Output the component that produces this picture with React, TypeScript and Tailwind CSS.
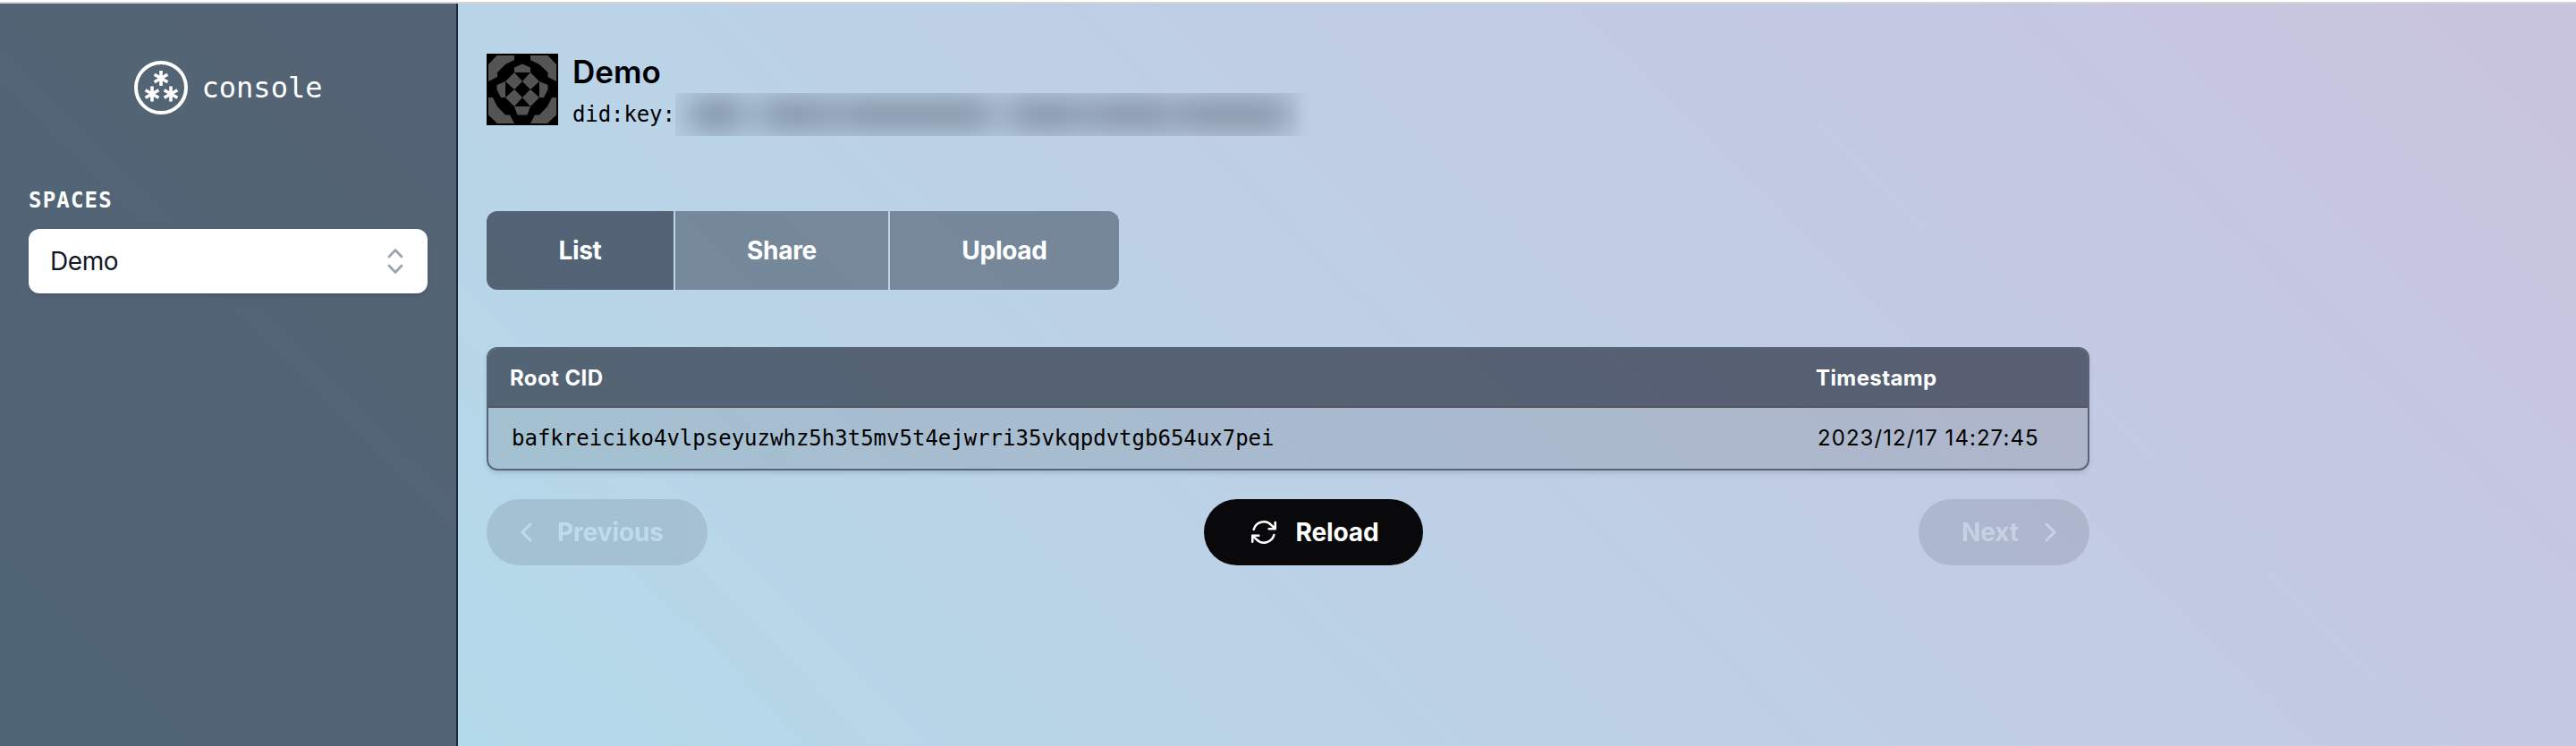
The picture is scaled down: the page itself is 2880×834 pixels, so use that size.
import React from 'react';

const TABS = [
  { label: 'List', className: 'w-[209px] bg-gray-900/60 rounded-l-[12px]' },
  { label: 'Share', className: 'w-[238px] bg-gray-900/40' },
  { label: 'Upload', className: 'w-[256px] bg-gray-900/40 rounded-r-[12px]' },
];

const ASTERISKS = [
  [30, 19.5],
  [20, 37],
  [41, 37],
];

function Logo() {
  return (
    <svg className="size-[60px]" viewBox="0 0 60 60" fill="none" stroke="white">
      <circle cx="30" cy="30" r="28" strokeWidth="4" />
      {ASTERISKS.map(([x, y]) => (
        <path
          key={`${x}-${y}`}
          transform={`translate(${x} ${y})`}
          d="M0-8.500V8.500M-7.400-4.200L7.400 4.200M-7.400 4.200L7.400-4.200"
          strokeWidth="3.600"
        />
      ))}
    </svg>
  );
}

function Identicon() {
  return (
    <svg className="size-20" viewBox="0 0 80 80">
      <rect width="80" height="80" fill="#000" />
      <g fill="#545454">
        <path d="M11.500 2H31V7L21 12L12 21V26L2 31V12Z" />
        <path d="M49 2H68.500L78 12V31L68.500 26V21L59 12L49 7Z" />
        <path d="M2 49H7L12 59L21 68.500H26L31 78H12L2 68.500Z" />
        <path d="M78 49H73L68 59L59 68.500H54L49 78H68L78 68.500Z" />
        <path d="M31 15.500L40 11.500L49 15.500V21H31Z" />
        <path d="M31 59H49L45.500 68.500H34.500Z" />
        <path d="M21 31V49H16L11.500 40V35Z" />
        <path d="M59 31V49H64L68.500 40V35Z" />
        <path d="M31 21L40 31L49 21L59 31L49 40L59 49L49 59L40 49L31 59L21 49L31 40L21 31Z" />
      </g>
      <path d="M40 31L49 40L40 49L31 40Z" />
    </svg>
  );
}

function Sidebar() {
  return (
    <nav className="w-[512px] shrink-0 border-r-2 border-gray-800 bg-gray-900/60 px-8 pt-[64px] text-white">
      <header className="flex items-center justify-center gap-[16px]">
        <Logo />
        <span className="font-['DejaVu_Sans_Mono',monospace] text-[32px] leading-[60px]">console</span>
      </header>
      <h3 className="mt-[76px] font-['DejaVu_Sans_Mono',monospace] text-[24px] font-bold leading-[40px] tracking-[1.2px]">
        SPACES
      </h3>
      <button className="mt-[12px] flex h-[72px] w-full items-center justify-between rounded-[12px] bg-white pl-[24px] pr-[22px] text-[28px] tracking-[-0.400px] text-gray-900 shadow-md">
        <span>Demo</span>
        <svg className="size-[28px]" viewBox="0 0 28 28" fill="none" stroke="#9ca3af" strokeWidth="2.600" strokeLinecap="round" strokeLinejoin="round">
          <path d="M7 9L14 1.500L21 9M7 19L14 26.500L21 19" />
        </svg>
      </button>
    </nav>
  );
}

function SpaceHeader() {
  return (
    <header className="flex gap-4">
      <Identicon />
      <div className="flex flex-col">
        <h1 className="text-[35px] font-semibold leading-[40px]">Demo</h1>
        <div className="mt-[4px] flex font-['DejaVu_Sans_Mono',monospace] text-[24px] leading-[48px]">
          <span className="tracking-[-0.100px]">did:key:</span>
          {/* redacted part of the key */}
          <div className="flex h-12 w-[712px] items-center overflow-hidden bg-slate-700/3 mask-r-from-97%">
            <div className="flex h-[28px] w-full gap-[6px] pl-[16px] pr-[26px] blur-[17px]">
              <i className="w-[60px] bg-gray-600/65" />
              <i className="ml-[12px] w-[84px] bg-gray-600/60" />
              <i className="w-[170px] bg-gray-600/60" />
              <i className="ml-[12px] w-[86px] bg-gray-600/60" />
              <i className="w-[92px] bg-gray-600/60" />
              <i className="flex-1 bg-gray-600/60" />
            </div>
          </div>
        </div>
      </div>
    </header>
  );
}

function UploadsTable() {
  return (
    <div className="mt-[64px] overflow-hidden rounded-[12px] border-2 border-[#56657a] shadow-md">
      <div className="flex h-[66px] items-center border-b-2 border-[#57555f] bg-gray-900/60 pl-[24px] pt-[2px] text-[24px] font-bold tracking-[0.400px] text-white">
        <span className="w-[1460px]">Root CID</span>
        <span>Timestamp</span>
      </div>
      <div className="flex h-[68px] items-center bg-black/10 pl-[26px] text-[24px]">
        <span className="w-[1460px] font-['DejaVu_Sans_Mono',monospace]">
          bafkreiciko4vlpseyuzwhz5h3t5mv5t4ejwrri35vkqpdvtgb654ux7pei
        </span>
        <span className="tracking-[1.050px]">2023/12/17 14:27:45</span>
      </div>
    </div>
  );
}

function Pagination() {
  return (
    <nav className="mt-8 flex justify-between text-[28px] font-bold tracking-[-0.100px] text-white">
      <button className="flex h-[74px] w-[247px] items-center rounded-full bg-zinc-950 pl-[38px] opacity-10">
        <svg className="w-[14px]" viewBox="0 0 14 24" fill="none" stroke="currentColor" strokeWidth="3" strokeLinecap="round" strokeLinejoin="round">
          <path d="M11 3L2 12L11 21" />
        </svg>
        <span className="ml-[27px]">Previous</span>
      </button>
      <button className="flex h-[74px] w-[245px] items-center rounded-full bg-zinc-950 pl-[50px]">
        <svg className="size-[34px]" viewBox="0 0 24 24" fill="none" stroke="currentColor" strokeWidth="1.800" strokeLinecap="round" strokeLinejoin="round">
          <path d="M16 9.300h5V4.300M3 19.600v-5h5m-5 0 3.200 3.200a8.250 8.250 0 0 0 13.800-3.700M4 9.900a8.250 8.250 0 0 1 13.800-3.700L21 9.300" />
        </svg>
        <span className="ml-[19px]">Reload</span>
      </button>
      <button className="flex h-[74px] w-[191px] items-center rounded-full bg-zinc-950 pl-[48px] opacity-10">
        <span>Next</span>
        <svg className="ml-[28px] w-[14px]" viewBox="0 0 14 24" fill="none" stroke="currentColor" strokeWidth="3" strokeLinecap="round" strokeLinejoin="round">
          <path d="M3 3L12 12L3 21" />
        </svg>
      </button>
    </nav>
  );
}

export default function App() {
  return (
    <div className="flex h-[834px] flex-col font-['Inter',sans-serif] text-black">
      <div className="h-1 shrink-0 border-b-2 border-[#d6d6d6] bg-white" />
      <div className="flex flex-1 bg-[linear-gradient(45deg,#afdaea_0%,#b3daea_14%,#b9d5e8_32%,#c1cce4_66%,#c6c7e1_85%,#c9c3dc_100%)]">
        <Sidebar />
        <main className="w-[1824px] pl-8 pt-[56px]">
          <SpaceHeader />
          <div className="mt-[84px] flex gap-[2px]">
            {TABS.map((tab) => (
              <button key={tab.label} className={`h-[88px] text-[28px] font-bold tracking-[-0.300px] text-white ${tab.className}`}>
                {tab.label}
              </button>
            ))}
          </div>
          <UploadsTable />
          <Pagination />
        </main>
      </div>
    </div>
  );
}
